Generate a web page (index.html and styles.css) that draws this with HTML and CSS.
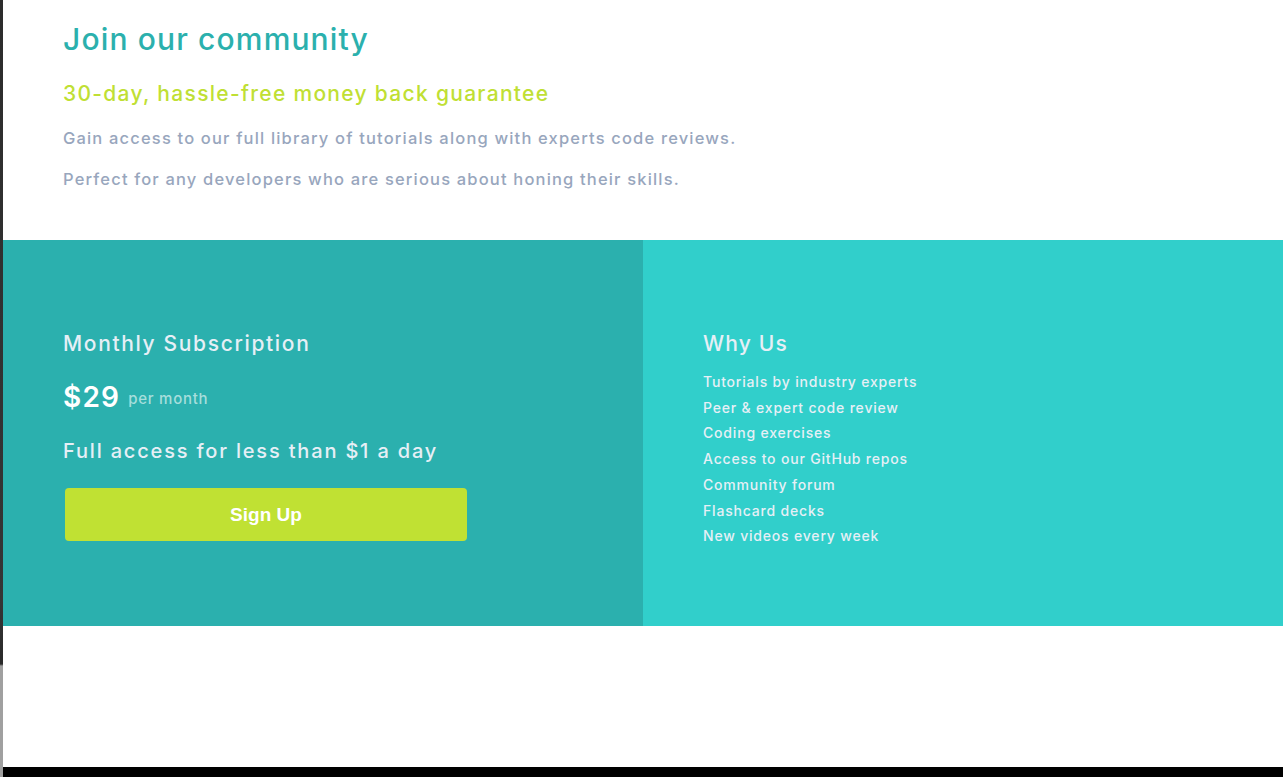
FILE: index.html
```html
<!DOCTYPE html>
<html lang="en">
<head>
<meta charset="utf-8">
<title>Single price grid</title>
<link rel="stylesheet" href="styles.css">
</head>
<body>
<div class="frame">
  <div class="edge"></div>
  <div class="screen">
    <main class="card">
      <section class="intro">
        <h1 class="title">Join our community</h1>
        <h2 class="guarantee">30-day, hassle-free money back guarantee</h2>
        <p class="lead">Gain access to our full library of tutorials along with experts code reviews.</p>
        <p class="lead">Perfect for any developers who are serious about honing their skills.</p>
      </section>
      <div class="panels">
        <section class="panel panel-sub">
          <h3 class="panel-title">Monthly Subscription</h3>
          <div class="price"><span class="amount">$29</span><span class="per">per month</span></div>
          <p class="access">Full access for less than $1 a day</p>
          <button class="signup">Sign Up</button>
        </section>
        <section class="panel panel-why">
          <h3 class="panel-title why-title">Why Us</h3>
          <ul class="reasons">
            <li>Tutorials by industry experts</li>
            <li>Peer &amp; expert code review</li>
            <li>Coding exercises</li>
            <li>Access to our GitHub repos</li>
            <li>Community forum</li>
            <li>Flashcard decks</li>
            <li>New videos every week</li>
          </ul>
        </section>
      </div>
    </main>
    <div class="bottom-bar"></div>
  </div>
</div>
</body>
</html>
```

FILE: styles.css
```css
html, body {
  margin: 0;
  padding: 0;
  background: #ffffff;
}
body {
  font-family: Inter, "Open Sans", sans-serif;
}
.frame {
  display: flex;
  height: 777px;
  overflow: hidden;
}
.edge {
  width: 3px;
  flex: none;
  background: linear-gradient(#2c2c2c 0, #353535 600px, #2a2a2a 664px, #a0a0a0 666px, #a0a0a0 100%);
}
.screen {
  flex: 1;
  display: flex;
  flex-direction: column;
}
.card {
  flex: 1;
}
.bottom-bar {
  height: 10px;
  background: #000;
}
.intro {
  padding: 21px 60px 0 60px;
  height: 240px;
  box-sizing: border-box;
}
.title {
  margin: 0;
  font-size: 30px;
  line-height: 36px;
  font-weight: 500;
  letter-spacing: 1.15px;
  color: #2bb0ad;
}
.guarantee {
  margin: 23px 0 0;
  font-size: 21px;
  line-height: 28px;
  font-weight: 500;
  letter-spacing: 1.3px;
  color: #c0df34;
}
.lead {
  margin: 15px 0 0;
  font-size: 16.5px;
  line-height: 30px;
  font-weight: 500;
  letter-spacing: 1.17px;
  color: #98a6bd;
}
.lead + .lead {
  margin-top: 11px;
}
.panels {
  display: grid;
  grid-template-columns: 640px 640px;
  height: 386px;
}
.panel {
  padding: 88px 60px 0;
  box-sizing: border-box;
  color: #e6eff6;
}
.panel-sub {
  background: #2bb0ae;
}
.panel-why {
  background: #31cfcb;
}
.panel-title {
  margin: 0;
  font-size: 21px;
  line-height: 32px;
  font-weight: 500;
  letter-spacing: 1.65px;
  color: #e6eff6;
}
.why-title {
  letter-spacing: 1.2px;
}
.price {
  display: flex;
  align-items: baseline;
  margin-top: 19px;
}
.amount {
  font-size: 28px;
  line-height: 36px;
  font-weight: 600;
  letter-spacing: 1.2px;
  color: #fff;
}
.per {
  margin-left: 8px;
  font-size: 15px;
  font-weight: 500;
  letter-spacing: 0.75px;
  color: #a6dedc;
  position: relative;
  top: -3px;
}
.access {
  margin: 21px 0 0;
  font-size: 20px;
  line-height: 30px;
  font-weight: 500;
  letter-spacing: 1.82px;
  color: #e6eff6;
}
.signup {
  display: block;
  margin: 22px 0 0 2px;
  width: 402px;
  height: 53px;
  border: none;
  border-radius: 4px;
  background: #c0e133;
  color: #fff;
  font-family: "Liberation Sans", Arial, sans-serif;
  font-weight: 700;
  font-size: 19px;
}
.reasons {
  list-style: none;
  margin: 9px 0 0;
  padding: 0;
  font-size: 14px;
  line-height: 25.7px;
  font-weight: 500;
  letter-spacing: 0.81px;
  color: #e6eff6;
}
```
